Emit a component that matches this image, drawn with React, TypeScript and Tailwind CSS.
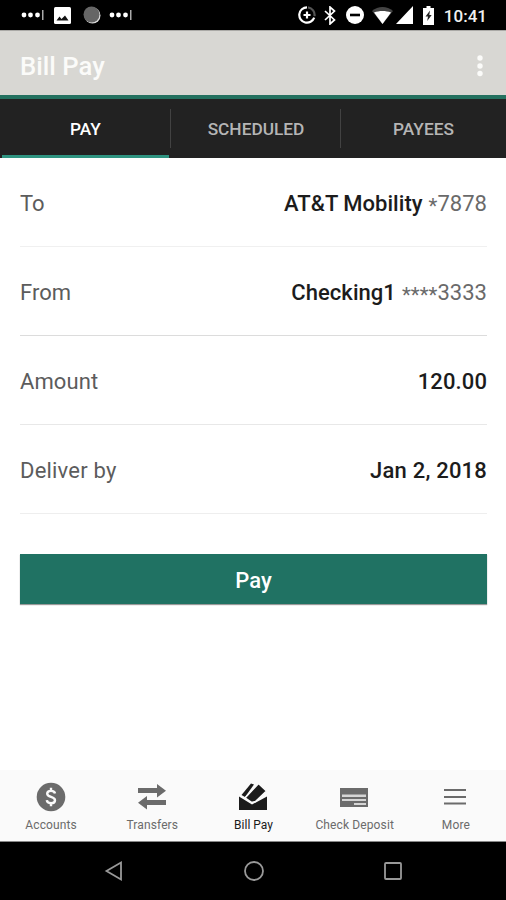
import { ReactNode } from 'react';
import clsx from 'clsx';

interface TabProps {
    label: string;
    active?: boolean;
    divider?: boolean;
}

interface FieldRowProps {
    label: string;
    value: string;
    mask?: string;
    border: string;
    spacing?: string;
}

interface NavItemProps {
    label: string;
    active?: boolean;
    children: ReactNode;
}

function CarrierDots() {
    return (
        <svg width="24" height="12" viewBox="0 0 24 12" fill="#fff">
            <circle cx="3" cy="6" r="2.4" />
            <circle cx="9.500" cy="6" r="2.4" />
            <circle cx="16.500" cy="6" r="2.4" />
            <path d="M21 1h1.5v10H21z" fill="#aaa" />
        </svg>
    );
}

function StatusBar() {
    return (
        <div className="flex h-[30px] shrink-0 items-center bg-black pr-[19px] pl-[21px]">
            <CarrierDots />
            <svg className="ml-[9px]" width="17" height="17" viewBox="0 0 17 17">
                <rect width="17" height="17" rx="1.5" fill="#fff" />
                <path d="M2.500 13.500 5.500 9.500l2 2.500L11 8.500l3.500 5z" fill="#111" />
            </svg>
            <svg className="ml-[12px]" width="18" height="18" viewBox="0 0 18 18">
                <circle cx="9.500" cy="9.500" r="8" fill="#ddd" />
                <circle cx="8.500" cy="8.500" r="8" fill="#666" />
            </svg>
            <div className="ml-[8px]">
                <CarrierDots />
            </div>

            <svg className="ml-auto" width="18" height="18" viewBox="0 0 18 18" fill="none" stroke="#fff" strokeWidth="2.2">
                <path d="M9 1.300a7.700 7.700 0 1 0 7.200 10.400" />
                <path d="M10 1.400a7.700 7.700 0 0 1 6.500 8.800" stroke="#555" />
                <path d="M9 5.500v7M5.500 9h7" />
            </svg>
            <svg className="ml-[8px]" width="12" height="19" viewBox="0 0 12 19" fill="none" stroke="#fff" strokeWidth="1.700">
                <path d="M1 5l9.500 9L6 18V1l4.500 4L1 14" />
            </svg>
            <svg className="ml-[10px]" width="18" height="18" viewBox="0 0 18 18">
                <circle cx="9" cy="9" r="9" fill="#fff" />
                <path d="M4 7.700h10v2.600H4z" />
            </svg>
            <svg className="ml-[8px]" width="21" height="17" viewBox="0 0 21 17">
                <path d="M0 4C6-1.200 15-1.200 21 4L10.500 17z" fill="#444" />
                <path d="M2 5.500C7.300 3.500 13.700 3.500 19 5.500L10.500 17z" fill="#fff" />
            </svg>
            <svg className="ml-[3px]" width="17" height="18" viewBox="0 0 17 18">
                <path d="M17 0v18H0z" fill="#fff" />
            </svg>
            <svg className="ml-[10px]" width="11" height="19" viewBox="0 0 11 19">
                <path d="M3.500 0h4v2H11v17H0V2h3.500z" fill="#fff" />
                <path d="M7 4.500 2.500 10.500H5l-.8 4.500L8.700 9H6.300z" fill="#222" />
            </svg>
            <span className="ml-[10px] pt-[3px] text-[17px] leading-none font-medium text-[#f0f0f0]">10:41</span>
        </div>
    );
}

function Tab({ label, active, divider }: TabProps) {
    return (
        <div className="relative flex items-center justify-center pt-[3px]">
            <span className={clsx('text-[17.3px] font-medium', active ? 'text-white' : 'text-[#b5b5b5]')}>{label}</span>
            {divider && <div className="absolute top-[10px] right-0 h-[39px] w-px bg-[#424242]" />}
            {active && <div className="absolute right-[2px] bottom-0 left-[2px] h-[3px] bg-[#2f9481]" />}
        </div>
    );
}

function FieldRow({ label, value, mask, border, spacing }: FieldRowProps) {
    return (
        <div className={clsx('flex h-[89px] items-center justify-between border-b pt-[2px] text-[22px]', border, spacing)}>
            <span className="text-[#5c5c5c]">{label}</span>
            <span className="flex items-baseline font-medium text-[#1c1c1c]">
                {value}
                {mask && (
                    <span className="ml-[6px] font-normal text-[#6a6a6a]">
                        <span className="relative top-[2px] text-[20.500px]">{mask.replace(/\d/g, '')}</span>
                        {mask.replace(/\*/g, '')}
                    </span>
                )}
            </span>
        </div>
    );
}

function NavItem({ label, active, children }: NavItemProps) {
    return (
        <div className={clsx('flex flex-1 flex-col items-center pt-[12px]', active ? 'text-[#1b1b1b]' : 'text-[#6b6b6b]')}>
            <svg width="30" height="30" viewBox="0 0 30 30" fill="currentColor">
                {children}
            </svg>
            <span className={clsx('mt-[5px] pl-px text-[12px] leading-4 whitespace-nowrap', !active && 'tracking-[0.12px]')}>
                {label}
            </span>
        </div>
    );
}

export default function App() {
    return (
        <main className="flex h-[900px] w-[506px] flex-col overflow-hidden bg-white font-['Roboto',sans-serif]">
            <StatusBar />

            <header className="flex h-[65px] shrink-0 items-center justify-between border-t border-[#aaa9a6] bg-[#d8d7d3] pr-[22px] pl-[20px]">
                <h1 className="pt-[6px] text-[25.700px] font-medium text-[#fbfbf9]">Bill Pay</h1>
                <svg className="mt-[5px]" width="8" height="22" viewBox="0 0 8 22" fill="#fbfbf9">
                    <circle cx="4" cy="3" r="2.700" />
                    <circle cx="4" cy="11" r="2.700" />
                    <circle cx="4" cy="18.500" r="2.700" />
                </svg>
            </header>

            <nav className="grid h-[63px] shrink-0 grid-cols-[171px_170px_165px] border-t-4 border-[#24715f] bg-[#222]">
                <Tab label="PAY" active divider />
                <Tab label="SCHEDULED" divider />
                <Tab label="PAYEES" />
            </nav>

            <section className="flex grow flex-col pr-[19px] pl-[20px]">
                <FieldRow label="To" value="AT&T Mobility" mask="*7878" border="border-[#f0f0f0]" spacing="tracking-[0.03px]" />
                <FieldRow label="From" value="Checking1" mask="****3333" border="border-[#dcdcdc]" spacing="tracking-[0.04px]" />
                <FieldRow label="Amount" value="120.00" border="border-[#e8e8e8]" spacing="tracking-[0.1px]" />
                <FieldRow label="Deliver by" value="Jan 2, 2018" border="border-[#eeeeee]" spacing="tracking-[0.2px]" />
                <button className="mt-[40px] h-[50px] bg-[#207263] pt-[2px] text-[22px] font-medium text-white shadow-[0_1px_1px_#999]">
                    Pay
                </button>
            </section>

            <footer className="flex h-[72px] shrink-0 border-b border-[#888] bg-[#fafafa]">
                <NavItem label="Accounts">
                    <circle cx="15" cy="15" r="14.300" />
                    <path
                        d="M19 11.500C18.500 8 11.200 8 11.200 11.700c0 3.800 7.800 2.600 7.800 6.500 0 4-7.800 4-8.200 0M15 5.800v3M15 21v3.200"
                        fill="none"
                        stroke="#fafafa"
                        strokeWidth="2.400"
                    />
                </NavItem>
                <NavItem label="Transfers">
                    <path d="M1 6h19V2l9 6.700-9 6.700V11H1zM29 18H10v-4l-9 6.700 9 6.700V23h19z" />
                </NavItem>
                <NavItem label="Bill Pay" active>
                    <path d="M1 14.500 14 22.500 29 14.500V28H1z" />
                    <path d="M13 1.500l3 1L7 15 3.500 13z" />
                    <path
                        d="M20.500 1.500l8 7.500L17.500 19.500l-4 1L7 16z"
                        stroke="#fafafa"
                        strokeWidth="1.600"
                    />
                </NavItem>
                <NavItem label="Check Deposit">
                    <path d="M1 6h28v19H1z" />
                    <path d="M3 12.500h24v2.500H3zM3 17h24v2H3zM15 21h12v2H15z" fill="#d5d5d5" />
                </NavItem>
                <NavItem label="More">
                    <path d="M4 7h22v2H4zM4 14h22v2H4zM4 20.500h22v2H4z" />
                </NavItem>
            </footer>

            <div className="flex h-[58px] shrink-0 items-center justify-between bg-black pr-[103px] pl-[104px]">
                <svg width="20" height="22" viewBox="0 0 20 22" fill="none" stroke="#999" strokeWidth="1.800">
                    <path d="M17 2.500v17L2.500 11z" />
                </svg>
                <svg width="22" height="22" viewBox="0 0 22 22" fill="none" stroke="#999" strokeWidth="1.800">
                    <circle cx="11" cy="11" r="9" />
                </svg>
                <svg width="20" height="20" viewBox="0 0 20 20" fill="none" stroke="#999" strokeWidth="1.800">
                    <rect x="2" y="2" width="16" height="16" rx="1" />
                </svg>
            </div>
        </main>
    );
}
